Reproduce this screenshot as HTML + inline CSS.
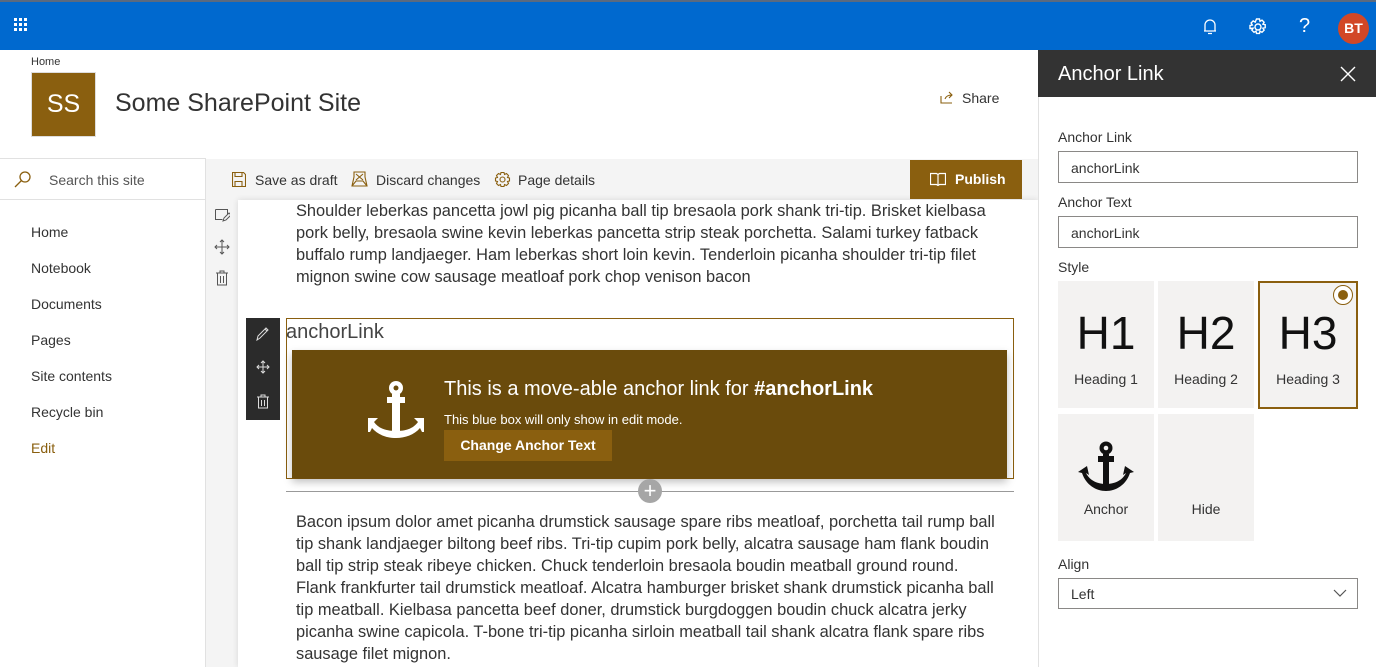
<!DOCTYPE html>
<html><head><meta charset="utf-8"><style>
*{box-sizing:border-box;margin:0;padding:0}
body{width:1376px;height:667px;overflow:hidden;font-family:"Liberation Sans",sans-serif;background:#fff;position:relative;color:#333}
.abs{position:absolute}
.top{left:0;top:0;width:1376px;height:50px;background:#0069cf;border-top:2px solid #5a6a80}
.nav a{position:absolute;left:31px;font-size:14px;color:#333}
.p{font-size:16.4px;line-height:22px;color:#333}
.tile{position:absolute;width:96px;height:127px;background:#f3f2f1;text-align:center}
.tile .big{font-size:46px;color:#111;margin-top:26px;line-height:52px}
.tile .lb{font-size:14px;color:#333;margin-top:12px}
.inp{position:absolute;left:1058px;width:300px;height:32px;border:1px solid #8a8886;font-size:14px;padding:8px 12px;color:#333}
.lab{position:absolute;left:1058px;font-size:14px;color:#333}
</style></head><body>
<div class="abs top">
 <svg class="abs" style="left:14px;top:16px" width="18" height="18"><g fill="#fff"><rect x="0" y="0" width="3" height="3"/><rect x="5" y="0" width="3" height="3"/><rect x="10" y="0" width="3" height="3"/><rect x="0" y="5" width="3" height="3"/><rect x="5" y="5" width="3" height="3"/><rect x="10" y="5" width="3" height="3"/><rect x="0" y="10" width="3" height="3"/><rect x="5" y="10" width="3" height="3"/><rect x="10" y="10" width="3" height="3"/></g></svg>
 <svg class="abs" style="left:1202px;top:16px" width="16" height="18" fill="none" stroke="#fff" stroke-width="1.3"><path d="M3 13V7a5 5 0 0 1 10 0v6H2h12M6 15.5h4"/></svg>
 <svg class="abs" style="left:1248px;top:15px" width="20" height="20" fill="none" stroke="#fff" stroke-width="1.4"><circle cx="10" cy="10" r="3"/><path d="M8.5 2h3l.5 2.3 2-1.2 2.1 2.1-1.2 2 2.3.5v3l-2.3.5 1.2 2-2.1 2.1-2-1.2-.5 2.3h-3l-.5-2.3-2 1.2-2.1-2.1 1.2-2L2 11.5v-3l2.3-.5-1.2-2 2.1-2.1 2 1.2z"/></svg>
 <div class="abs" style="left:1299px;top:13px;color:#fff;font-size:20px">?</div>
 <div class="abs" style="left:1338px;top:11px;width:31px;height:31px;border-radius:50%;background:#d24726;color:#fff;font-size:14px;font-weight:bold;text-align:center;line-height:31px">BT</div>
</div>
<div class="abs" style="left:31px;top:56px;font-size:11px;color:#333">Home</div>
<div class="abs" style="left:32px;top:73px;width:63px;height:63px;background:#8a5f0f;color:#fff;font-size:25px;text-align:center;line-height:63px;outline:1px solid #ddd">SS</div>
<div class="abs" style="left:115px;top:89px;font-size:25px;color:#333">Some SharePoint Site</div>
<svg class="abs" style="left:940px;top:91px" width="14" height="13" fill="none" stroke="#8a5f0f" stroke-width="1.1"><path d="M1 5v7h11M5 8c1-3 4-4 7-4M9 1l3 3-3 3"/></svg>
<div class="abs" style="left:962px;top:90px;font-size:14px">Share</div>
<div class="abs" style="left:0;top:158px;width:206px;height:509px;border-top:1px solid #e1e1e1;border-right:1px solid #e1e1e1"></div>
<div class="abs" style="left:0;top:199px;width:205px;height:1px;background:#e1e1e1"></div>
<svg class="abs" style="left:13px;top:170px" width="20" height="20" fill="none" stroke="#8a5f0f" stroke-width="1.3"><circle cx="12" cy="7" r="5"/><path d="M8.5 10.5 2 17"/></svg>
<div class="abs" style="left:49px;top:172px;font-size:14px;color:#555">Search this site</div>
<div class="nav"><a style="top:224px">Home</a><a style="top:260px">Notebook</a><a style="top:296px">Documents</a><a style="top:332px">Pages</a><a style="top:368px">Site contents</a><a style="top:404px">Recycle bin</a><a style="top:440px;color:#8a5f0f">Edit</a></div>
<div class="abs" style="left:206px;top:159px;width:832px;height:508px;background:#f4f4f4"></div>
<div class="abs" style="left:238px;top:200px;width:800px;height:467px;background:#fff;box-shadow:0 0 6px rgba(0,0,0,.12)"></div>
<svg class="abs" style="left:232px;top:172px" width="14" height="15" fill="none" stroke="#8a5f0f" stroke-width="1.1"><path d="M.5.5h11l2 2v12H.5zM3 .5v4h7v-4M3 14.5v-5h7v5"/></svg>
<div class="abs" style="left:255px;top:172px;font-size:14px">Save as draft</div>
<svg class="abs" style="left:351px;top:171px" width="17" height="16" fill="none" stroke="#8a5f0f" stroke-width="1.1"><path d="M1 15h15L14 6V1H3v5zM5 3l7 6M12 3 5 9M1 15l4-5h7l4 5"/></svg>
<div class="abs" style="left:376px;top:172px;font-size:14px">Discard changes</div>
<svg class="abs" style="left:494px;top:171px" width="17" height="17" fill="none" stroke="#8a5f0f" stroke-width="1.1"><circle cx="8.5" cy="8.5" r="2.5"/><path d="M7 1.5h3l.5 2 2-1 2 2-1 2 2 .5v3l-2 .5 1 2-2 2-2-1-.5 2H7l-.5-2-2 1-2-2 1-2-2-.5v-3l2-.5-1-2 2-2 2 1z"/></svg>
<div class="abs" style="left:518px;top:172px;font-size:14px">Page details</div>
<div class="abs" style="left:910px;top:160px;width:112px;height:39px;background:#8a5f0f;color:#fff;font-size:14px;font-weight:bold;line-height:39px;padding-left:45px">Publish</div>
<svg class="abs" style="left:930px;top:172px" width="16" height="14" fill="none" stroke="#fff" stroke-width="1.2"><path d="M.5 1.5h6l1.5 1 1.5-1h6v11h-6L8 13.5 6.5 12.5h-6zM8 2.5v11"/></svg>
<svg class="abs" style="left:214px;top:207px" width="16" height="16" fill="none" stroke="#555" stroke-width="1"><path d="M1.5 2.5h12v5M1.5 2.5v10h7M9 14l1-3 5-5 2 2-5 5z"/></svg>
<svg class="abs" style="left:214px;top:239px" width="16" height="16" fill="none" stroke="#555" stroke-width="1"><path d="M8 1v14M1 8h14M6 3l2-2 2 2M6 13l2 2 2-2M3 6 1 8l2 2M13 6l2 2-2 2"/></svg>
<svg class="abs" style="left:216px;top:270px" width="12" height="16" fill="none" stroke="#555" stroke-width="1"><path d="M0 3h12M4 3V1h4v2M1.5 3v12h9V3M4.5 6v7M7.5 6v7"/></svg>
<div class="abs p" style="left:296px;top:200px;width:718px">Shoulder leberkas pancetta jowl pig picanha ball tip bresaola pork shank tri-tip. Brisket kielbasa pork belly, bresaola swine kevin leberkas pancetta strip steak porchetta. Salami turkey fatback buffalo rump landjaeger. Ham leberkas short loin kevin. Tenderloin picanha shoulder tri-tip filet mignon swine cow sausage meatloaf pork chop venison bacon</div>
<div class="abs" style="left:246px;top:318px;width:34px;height:102px;background:#2b2b2b"></div>
<svg class="abs" style="left:256px;top:326px" width="14" height="15" fill="none" stroke="#ddd" stroke-width="1"><path d="M1 14l1-4 8-8 2 2-8 8zM9 3l2 2"/></svg>
<svg class="abs" style="left:256px;top:360px" width="14" height="14" fill="none" stroke="#ddd" stroke-width="1"><path d="M7 1v12M1 7h12M5 3l2-2 2 2M5 11l2 2 2-2M3 5 1 7l2 2M11 5l2 2-2 2"/></svg>
<svg class="abs" style="left:257px;top:394px" width="12" height="15" fill="none" stroke="#ddd" stroke-width="1"><path d="M0 3h12M4 3V1h4v2M1.5 3v11h9V3M4.5 6v6M7.5 6v6"/></svg>
<div class="abs" style="left:286px;top:318px;width:728px;height:161px;border:1px solid #8a5f0f"></div>
<div class="abs" style="left:286px;top:321px;font-size:20px;color:#444">anchorLink</div>
<div class="abs" style="left:292px;top:350px;width:715px;height:128px;background:#6a4b0c;box-shadow:0 4px 8px rgba(0,0,0,.25)"></div>
<svg class="abs" style="left:366px;top:380px" width="60" height="58" fill="#fff"><circle cx="30" cy="8" r="7"/><circle cx="30" cy="8" r="2.5" fill="#6a4b0c"/><rect x="21" y="17" width="18" height="6"/><rect x="26" y="14" width="8" height="38"/><path d="M2 38h10l-4 4c5 7 13 9 22 9s17-2 22-9l-4-4h10v14h-2l-2-4c-6 7-15 10-24 10S12 55 6 48l-2 4H2z"/></svg>
<div class="abs" style="left:444px;top:378px;font-size:20px;color:#fff">This is a move-able anchor link for <b>#anchorLink</b></div>
<div class="abs" style="left:444px;top:412px;font-size:13px;color:#fff">This blue box will only show in edit mode.</div>
<div class="abs" style="left:444px;top:430px;width:168px;height:31px;background:#8a5f0f;color:#fff;font-size:14px;font-weight:bold;text-align:center;line-height:31px">Change Anchor Text</div>
<div class="abs" style="left:286px;top:491px;width:728px;height:1px;background:#999"></div>
<div class="abs" style="left:638px;top:479px;width:24px;height:24px;border-radius:50%;background:#a6a6a6;color:#fff;font-size:22px;text-align:center;line-height:23px">+</div>
<div class="abs p" style="left:296px;top:511px;width:703px">Bacon ipsum dolor amet picanha drumstick sausage spare ribs meatloaf, porchetta tail rump ball tip shank landjaeger biltong beef ribs. Tri-tip cupim pork belly, alcatra sausage ham flank boudin ball tip strip steak ribeye chicken. Chuck tenderloin bresaola boudin meatball ground round. Flank frankfurter tail drumstick meatloaf. Alcatra hamburger brisket shank drumstick picanha ball tip meatball. Kielbasa pancetta beef doner, drumstick burgdoggen boudin chuck alcatra jerky picanha swine capicola. T-bone tri-tip picanha sirloin meatball tail shank alcatra flank spare ribs sausage filet mignon.</div>
<div class="abs" style="left:1038px;top:50px;width:338px;height:617px;background:#fff;border-left:1px solid #e1e1e1"></div>
<div class="abs" style="left:1038px;top:50px;width:338px;height:47px;background:#333"></div>
<div class="abs" style="left:1058px;top:63px;font-size:20px;color:#fff">Anchor Link</div>
<svg class="abs" style="left:1340px;top:66px" width="16" height="16" stroke="#fff" stroke-width="1.4"><path d="M1 1l14 14M15 1 1 15"/></svg>
<div class="lab" style="top:129px">Anchor Link</div>
<div class="inp" style="top:151px">anchorLink</div>
<div class="lab" style="top:194px">Anchor Text</div>
<div class="inp" style="top:216px">anchorLink</div>
<div class="lab" style="top:259px">Style</div>
<div class="tile" style="left:1058px;top:281px"><div class="big">H1</div><div class="lb">Heading 1</div></div>
<div class="tile" style="left:1158px;top:281px"><div class="big">H2</div><div class="lb">Heading 2</div></div>
<div class="tile" style="left:1258px;top:281px;width:100px;height:128px;border:2px solid #8a5f0f"><div class="big" style="margin-top:24px">H3</div><div class="lb">Heading 3</div></div>
<div class="abs" style="left:1333px;top:285px;width:20px;height:20px;border-radius:50%;border:1px solid #8a5f0f;background:#fff"><div style="margin:4px;width:10px;height:10px;border-radius:50%;background:#8a5f0f"></div></div>
<div class="tile" style="left:1058px;top:414px"><svg style="margin-top:26px" width="60" height="52" fill="#111"><circle cx="30" cy="8" r="6.5"/><circle cx="30" cy="8" r="2.3" fill="#f3f2f1"/><rect x="22" y="16" width="16" height="6"/><rect x="27" y="14" width="6" height="36"/><path d="M2 32l9-6 2 9-3-2c4 8 12 11 20 11s16-3 20-11l-3 2 2-9 9 6-4 1c-4 12-14 18-24 18S10 45 6 33z"/></svg><div class="lb" style="margin-top:4px">Anchor</div></div>
<div class="tile" style="left:1158px;top:414px"><div class="lb" style="margin-top:87px">Hide</div></div>
<div class="lab" style="top:556px">Align</div>
<div class="inp" style="top:578px;height:31px;padding-top:7px">Left</div>
<svg class="abs" style="left:1333px;top:589px" width="14" height="9" fill="none" stroke="#555" stroke-width="1.2"><path d="M1 1l6 6 6-6"/></svg>
</body></html>
